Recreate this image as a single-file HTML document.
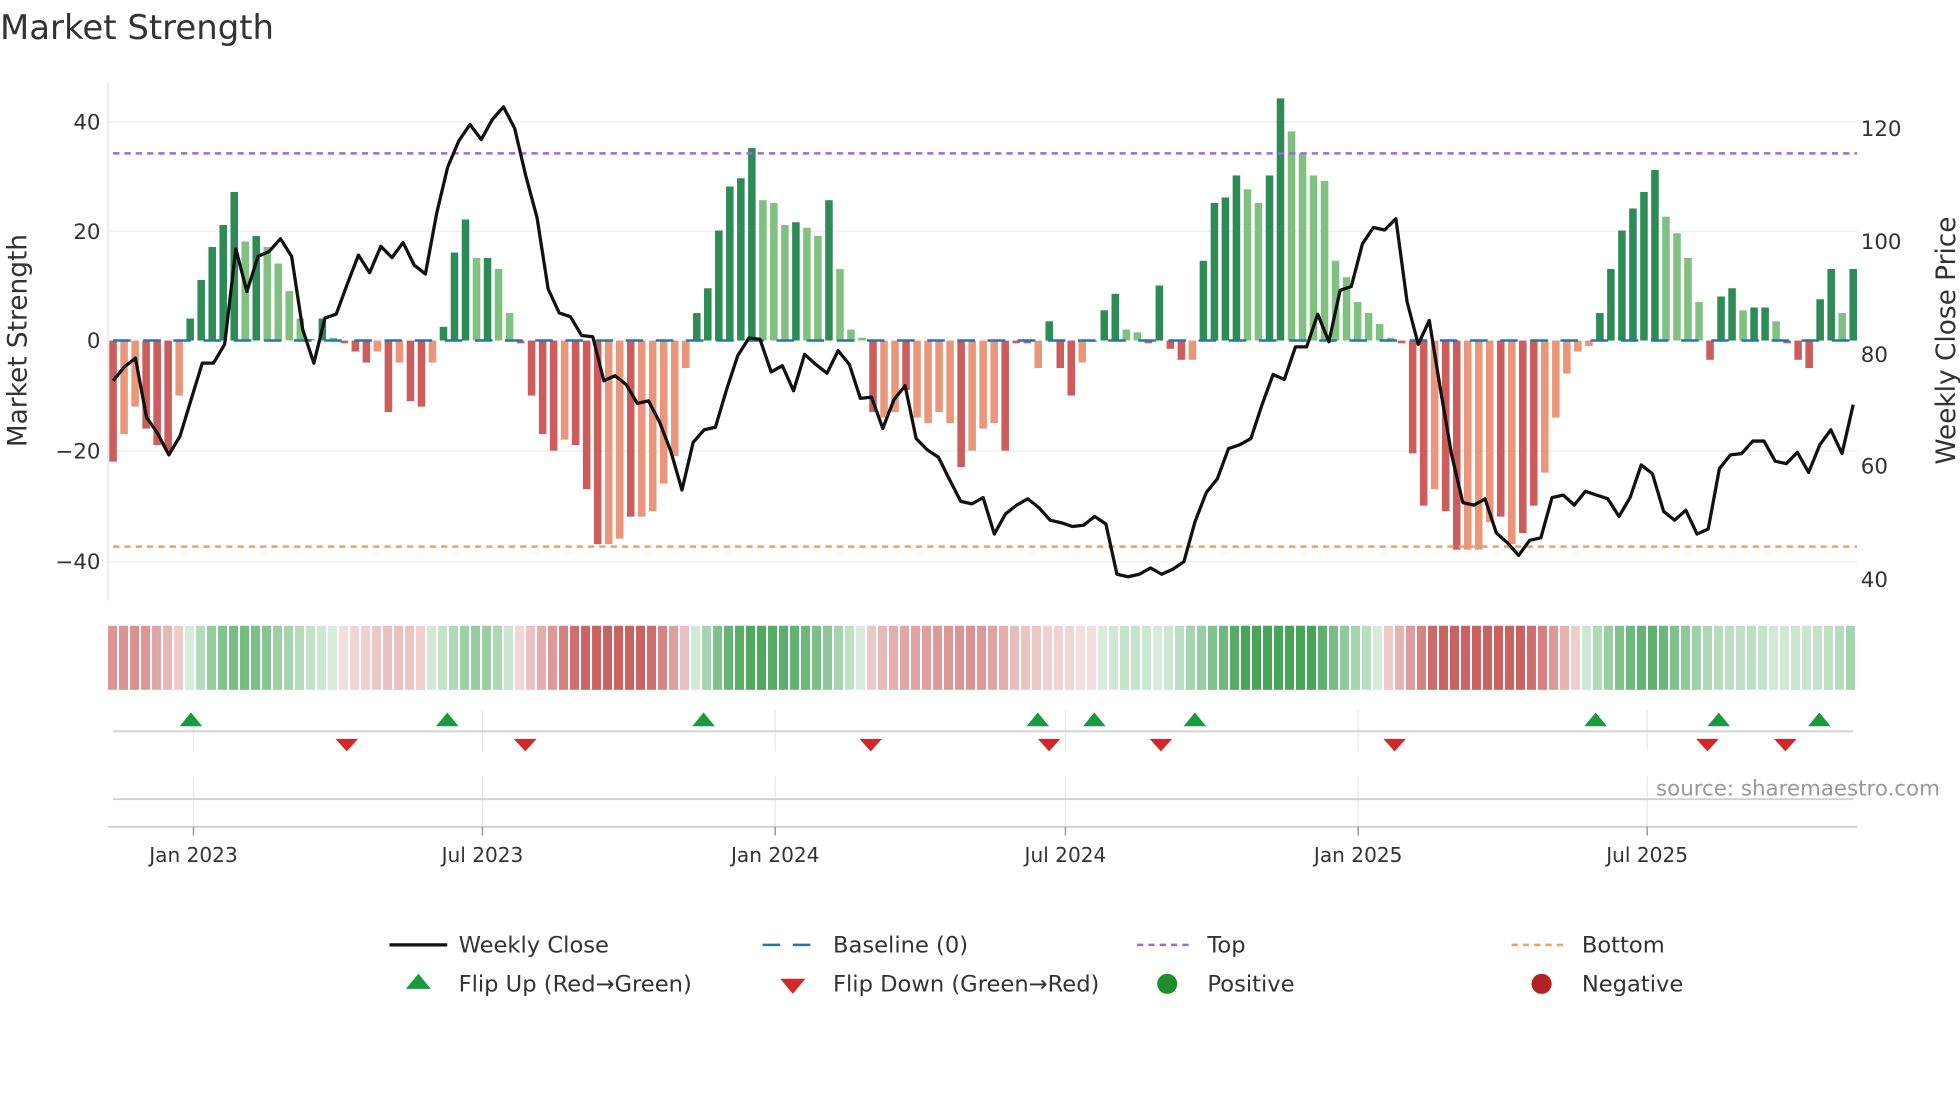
<!DOCTYPE html>
<html><head><meta charset="utf-8"><style>
html,body{margin:0;padding:0;background:#fff;}
svg{display:block;font-family:"DejaVu Sans","Liberation Sans",sans-serif;}
</style></head><body>
<svg id="s" width="1960" height="1102" viewBox="0 0 1560 877" xmlns="http://www.w3.org/2000/svg">
<rect width="1560" height="877" fill="#fff"/>
<text x="0" y="31" font-size="27" fill="#333">Market Strength</text>
<g stroke="#eeeeee" stroke-width="1">
<line x1="86" y1="97" x2="1478" y2="97"/><line x1="86" y1="184" x2="1478" y2="184"/>
<line x1="86" y1="359" x2="1478" y2="359"/><line x1="86" y1="447" x2="1478" y2="447"/>
</g>
<line x1="86" y1="65" x2="86" y2="478" stroke="#e4e4e4"/>
<g font-size="17" fill="#333" text-anchor="end">
<text x="80" y="103">40</text><text x="80" y="190">20</text><text x="80" y="277">0</text>
<text x="80" y="365">−20</text><text x="80" y="453">−40</text></g>
<g font-size="17" fill="#333">
<text x="1481" y="108">120</text><text x="1481" y="198">100</text><text x="1481" y="288">80</text>
<text x="1481" y="377">60</text><text x="1481" y="467">40</text></g>
<text transform="translate(21,271) rotate(-90)" font-size="21" fill="#333" text-anchor="middle">Market Strength</text>
<text transform="translate(1556,271) rotate(-90)" font-size="21" fill="#333" text-anchor="middle">Weekly Close Price</text>
<g id="bars"></g>
<line x1="90" y1="271" x2="1478" y2="271" stroke="#1f77b4" stroke-width="2" stroke-dasharray="14,10"/>
<line x1="90" y1="122" x2="1478" y2="122" stroke="#9b6bd6" stroke-width="2" stroke-dasharray="5,4"/>
<line x1="90" y1="435" x2="1478" y2="435" stroke="#f0a060" stroke-width="2" stroke-dasharray="5,4"/>
<polyline id="pl" fill="none" stroke="#111" stroke-width="2.6" stroke-linejoin="round"/>
<g id="heat"></g>
<g stroke="#e8e8ee" stroke-width="1">
<line x1="154" y1="565" x2="154" y2="598"/><line x1="384" y1="565" x2="384" y2="598"/><line x1="617" y1="565" x2="617" y2="598"/><line x1="848" y1="565" x2="848" y2="598"/><line x1="1081" y1="565" x2="1081" y2="598"/><line x1="1311" y1="565" x2="1311" y2="598"/>
<line x1="154" y1="618" x2="154" y2="658"/><line x1="384" y1="618" x2="384" y2="658"/><line x1="617" y1="618" x2="617" y2="658"/><line x1="848" y1="618" x2="848" y2="658"/><line x1="1081" y1="618" x2="1081" y2="658"/><line x1="1311" y1="618" x2="1311" y2="658"/>
</g>
<line x1="90" y1="582" x2="1475" y2="582" stroke="#d0d0d6" stroke-width="1.5"/>
<line x1="90" y1="636" x2="1475" y2="636" stroke="#d0d0d6" stroke-width="1.5"/>
<line x1="86" y1="658" x2="1478" y2="658" stroke="#cfcfd4" stroke-width="1.5"/>
<g stroke="#999" stroke-width="1.2">
<line x1="154" y1="658" x2="154" y2="665"/><line x1="384" y1="658" x2="384" y2="665"/><line x1="617" y1="658" x2="617" y2="665"/><line x1="848" y1="658" x2="848" y2="665"/><line x1="1081" y1="658" x2="1081" y2="665"/><line x1="1311" y1="658" x2="1311" y2="665"/></g>
<g id="mk"></g>
<text x="1544" y="633" font-size="17" fill="#999" text-anchor="end">source: sharemaestro.com</text>
<g font-size="16" fill="#333" text-anchor="middle">
<text x="154" y="686">Jan 2023</text><text x="384" y="686">Jul 2023</text><text x="617" y="686">Jan 2024</text>
<text x="848" y="686">Jul 2024</text><text x="1081" y="686">Jan 2025</text><text x="1311" y="686">Jul 2025</text></g>
<g font-size="18" fill="#333">
<line x1="310" y1="752" x2="356" y2="752" stroke="#111" stroke-width="2.6"/>
<text x="365" y="758">Weekly Close</text>
<line x1="607" y1="752" x2="651" y2="752" stroke="#1f77b4" stroke-width="2" stroke-dasharray="14,10"/>
<text x="663" y="758">Baseline (0)</text>
<line x1="905" y1="752" x2="950" y2="752" stroke="#9b6bd6" stroke-width="2" stroke-dasharray="5,4"/>
<text x="961" y="758">Top</text>
<line x1="1203" y1="752" x2="1248" y2="752" stroke="#f0a060" stroke-width="2" stroke-dasharray="5,4"/>
<text x="1259" y="758">Bottom</text>
<polygon points="323,787 343,787 333,775" fill="#1a9a3e"/>
<text x="365" y="789">Flip Up (Red→Green)</text>
<polygon points="621,779 641,779 631,791" fill="#d62728"/>
<text x="663" y="789">Flip Down (Green→Red)</text>
<circle cx="929" cy="783" r="8" fill="#1f8f2a"/>
<text x="961" y="789">Positive</text>
<circle cx="1227" cy="783" r="8" fill="#b22222"/>
<text x="1259" y="789">Negative</text>
</g>
</svg>
<script>
var NS="http://www.w3.org/2000/svg";
var B=[[-22,1],[-17,0],[-12,0],[-16,1],[-19,1],[-20,1],[-10,0],[4,1],[11,1],[17,1],[21,1],[27,1],[18,0],[19,1],[17,0],[14,0],[9,0],[4,0],[0.3,0],[4,1],[0.5,0],[-0.5,1],[-2,1],[-4,1],[-2,0],[-13,1],[-4,0],[-11,1],[-12,1],[-4,0],[2.5,1],[16,1],[22,1],[15,0],[15,1],[13,0],[5,0],[-0.5,1],[-10,1],[-17,1],[-20,1],[-18,0],[-19,1],[-27,1],[-37,1],[-37,0],[-36,0],[-32,1],[-32,0],[-31,0],[-26,0],[-21,0],[-5,0],[5,1],[9.5,1],[20,1],[28,1],[29.5,1],[35,1],[25.5,0],[25,0],[21,0],[21.5,1],[20.5,0],[19,0],[25.5,1],[13,0],[2,0],[0.5,0],[-13,1],[-14,0],[-13,0],[-9,1],[-14,0],[-15,0],[-13,0],[-15,0],[-23,1],[-20,0],[-16,0],[-15,0],[-20,1],[-0.5,1],[-0.5,1],[-5,0],[3.5,1],[-5,1],[-10,1],[-4,0],[0,0],[5.5,1],[8.5,1],[2,0],[1.5,0],[-0.5,1],[10,1],[-1.5,1],[-3.5,1],[-3.5,0],[14.5,1],[25,1],[26,1],[30,1],[27.5,0],[25,0],[30,1],[44,1],[38,0],[34,0],[30,0],[29,0],[14.5,0],[11.5,0],[7,0],[5,0],[3,0],[0.5,0],[-0.5,1],[-20.5,1],[-30,1],[-27,0],[-31,1],[-38,1],[-38,0],[-38,0],[-33,0],[-32,1],[-37,0],[-35,1],[-30,1],[-24,0],[-14,0],[-6,0],[-2,0],[-1,0],[5,1],[13,1],[20,1],[24,1],[27,1],[31,1],[22.5,0],[19.5,0],[15,0],[7,0],[-3.5,1],[8,1],[9.5,1],[5.5,0],[6,1],[6,1],[3.5,0],[-0.5,1],[-3.5,1],[-5,1],[7.5,1],[13,1],[5,0],[13,1]];
var n=B.length, x0=90, step=(1475-90)/(n-1);
var g=document.getElementById('bars');
for(var i=0;i<n;i++){var v=B[i][0],d=B[i][1];var x=x0+i*step-3;var h=Math.abs(v)*4.38;
var r=document.createElementNS(NS,'rect');r.setAttribute('x',x);r.setAttribute('width',6);
r.setAttribute('y',v>=0?271-h:271);r.setAttribute('height',Math.max(h,1));
r.setAttribute('fill',v>=0?(d?'#2e8b57':'#80c080'):(d?'#cd5c5c':'#e9967a'));g.appendChild(r);}
var hg=document.getElementById('heat');var hw=(1478-86)/n;
for(var i=0;i<n;i++){var s=0,c=0;for(var k=-3;k<=3;k++){var j=i+k;if(j>=0&&j<n){s+=B[j][0];c++;}}s/=c;
var a=Math.min(1,0.2+Math.abs(s)/35);var col=s>=0?'rgba(60,160,80,'+(a*0.95)+')':'rgba(200,90,90,'+(a*0.95)+')';
var r=document.createElementNS(NS,'rect');r.setAttribute('x',86+i*hw);r.setAttribute('width',hw-1.6);r.setAttribute('y',498);r.setAttribute('height',51);r.setAttribute('fill',col);hg.appendChild(r);}
var ys=[303,292,285,332,345,362,347,318,289,289,274,198,232,204,200,190,204,262,289,253,250,226,203,217,196,205,193,211,218,170,133,112,99,111,95,85,102,140,173,230,249,252,267,268,303,299,306,321,319,336,359,390,352,342,340,310,283,269,270,296,291,311,282,290,297,279,290,317,316,341,318,307,349,358,364,382,399,401,396,425,409,402,397,404,414,416,419,418,411,417,457,459,457,452,457,453,447,415,392,381,357,354,349,322,298,302,276,276,250,272,231,228,194,181,183,174,240,274,255,310,362,400,402,397,424,432,442,430,428,396,394,402,391,394,397,411,396,370,377,407,414,406,425,421,373,362,361,351,351,367,369,360,376,354,342,361,322];
var m=ys.length,ls=(1475-90)/(m-1),pts=[];for(var i=0;i<m;i++)pts.push((90+i*ls).toFixed(1)+','+ys[i]);
document.getElementById('pl').setAttribute('points',pts.join(' '));
var mk=document.getElementById('mk');
[152,356,560,826,871,951,1270,1368,1448].forEach(function(x){var p=document.createElementNS(NS,'polygon');p.setAttribute('points',(x-9)+',578 '+(x+9)+',578 '+x+',567');p.setAttribute('fill','#1a9a3e');mk.appendChild(p);});
[276,418,693,835,924,1110,1359,1421].forEach(function(x){var p=document.createElementNS(NS,'polygon');p.setAttribute('points',(x-9)+',588 '+(x+9)+',588 '+x+',598');p.setAttribute('fill','#d62728');mk.appendChild(p);});
</script>
</body></html>
